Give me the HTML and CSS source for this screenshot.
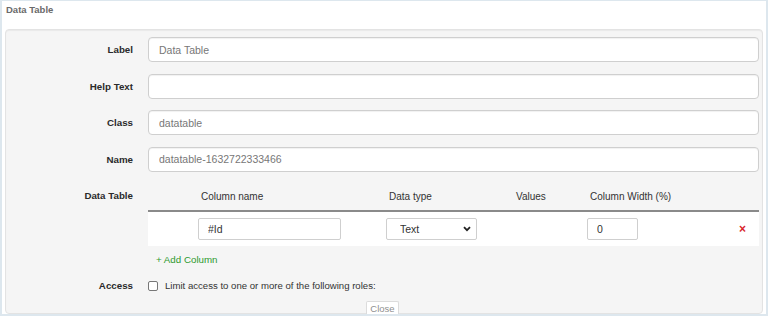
FILE: index.html
```html
<!DOCTYPE html>
<html>
<head>
    <title>Data Table</title>
    <link rel="stylesheet" href="styles.css">
</head>
<body>
    <div class="window">
        <div class="window-title">Data Table</div>
        <div class="panel">
            <div class="form-row">
                <label class="form-label">Label</label>
                <input class="form-control" value="Data Table">
            </div>
            <div class="form-row">
                <label class="form-label">Help Text</label>
                <input class="form-control" value="">
            </div>
            <div class="form-row">
                <label class="form-label">Class</label>
                <input class="form-control" value="datatable">
            </div>
            <div class="form-row">
                <label class="form-label">Name</label>
                <input class="form-control" value="datatable-1632722333466">
            </div>
            <div class="form-row table-row">
                <label class="form-label">Data Table</label>
                <div class="columns">
                    <div class="columns-head">
                        <span></span>
                        <span>Column name</span>
                        <span>Data type</span>
                        <span>Values</span>
                        <span>Column Width (%)</span>
                        <span></span>
                    </div>
                    <div class="columns-body">
                        <span></span>
                        <span><input class="cell-input name-input" value="#Id"></span>
                        <span>
                            <span class="select-wrap">
                                <select class="cell-select"><option>Text</option></select>
                                <svg class="select-arrow" width="8" height="6" viewBox="0 0 8 6"><path d="M1 1.2 L4 4.2 L7 1.2" fill="none" stroke="#222" stroke-width="1.8"/></svg>
                            </span>
                        </span>
                        <span></span>
                        <span><input class="cell-input width-input" value="0"></span>
                        <span class="remove">&times;</span>
                    </div>
                    <a class="add-column">+ Add Column</a>
                </div>
            </div>
            <div class="form-row access-row">
                <label class="form-label">Access</label>
                <label class="check">
                    <input type="checkbox" class="check-box">
                    <span>Limit access to one or more of the following roles:</span>
                </label>
            </div>
            <div class="panel-foot">
                <button class="close-btn">Close</button>
            </div>
        </div>
    </div>
</body>
</html>
```

FILE: styles.css
```css
body {
    margin: 0;
    font-family: "Liberation Sans", Arial, sans-serif;
    color: #333;
    background-color: #ffffff;
}
.window {
    width: 768px;
    height: 316px;
    box-sizing: border-box;
    border: 2px solid #dde7ee;
    border-top-width: 1px;
    padding: 0 3px 0 3px;
    background-color: #ffffff;
    overflow: hidden;
}
.window-title {
    font-size: 9.5px;
    font-weight: bold;
    color: #6a6a6a;
    line-height: 14px;
    padding: 2px 0 0 1px;
    margin-bottom: 12px;
}
.panel {
    background-color: #f5f5f5;
    border: 1px solid #e3e3e3;
    border-radius: 4px;
    box-shadow: inset 0 1px 1px rgba(0, 0, 0, 0.05);
    padding: 7px 3px 0 0;
}
.form-row {
    display: grid;
    grid-template-columns: 127px 1fr;
    column-gap: 15px;
    align-items: center;
    margin-bottom: 11.5px;
}
.form-label {
    text-align: right;
    font-size: 9.75px;
    font-weight: bold;
    color: #2a2a2a;
}
.form-control {
    height: 25px;
    box-sizing: border-box;
    border: 1px solid #cfcfcf;
    border-radius: 4px;
    box-shadow: inset 0 1px 1px rgba(0, 0, 0, 0.06);
    padding: 0 10px;
    font-family: inherit;
    font-size: 10.5px;
    color: #777;
    background-color: #ffffff;
    margin: 0;
}
.table-row {
    align-items: start;
    margin-bottom: 10px;
}
.table-row .form-label {
    line-height: 26px;
}
.columns-head,
.columns-body {
    display: grid;
    grid-template-columns: 45px 188px 127px 74px 120px 1fr;
    align-items: center;
}
.columns-head {
    height: 27px;
    border-bottom: 2px solid #8a8a8a;
    font-size: 10px;
    color: #333;
}
.columns-head span {
    padding-left: 8px;
}
.columns-body {
    height: 34px;
    background-color: #ffffff;
}
.columns-body > span {
    padding-left: 5px;
    display: flex;
    align-items: center;
}
.cell-input {
    height: 22px;
    box-sizing: border-box;
    border: 1px solid #cfcfcf;
    border-radius: 2px;
    padding: 0 9px;
    font-family: inherit;
    font-size: 10.5px;
    color: #333;
    margin: 0;
}
.name-input {
    width: 143px;
}
.width-input {
    width: 51px;
}
.select-wrap {
    position: relative;
    display: inline-block;
}
.cell-select {
    appearance: none;
    width: 91px;
    height: 22px;
    box-sizing: border-box;
    border: 1px solid #cfcfcf;
    border-radius: 2px;
    background-color: #ffffff;
    padding: 0 0 0 13px;
    font-family: inherit;
    font-size: 10.5px;
    color: #333;
    margin: 0;
}
.select-arrow {
    position: absolute;
    right: 6px;
    top: 8px;
}
.columns-body .remove {
    justify-content: flex-end;
    padding-right: 13px;
    color: #d9262c;
    font-weight: bold;
    font-size: 12px;
}
.add-column {
    display: block;
    margin-top: 7px;
    padding-left: 8px;
    line-height: 14px;
    font-size: 9.75px;
    color: #2e9a2e;
}
.access-row {
    margin-bottom: 0;
}
.check {
    display: flex;
    align-items: center;
    gap: 7px;
    font-size: 9.6px;
    color: #333;
    line-height: 14px;
    padding-top: 2px;
}
.check-box {
    appearance: none;
    width: 10px;
    height: 10px;
    margin: 0;
    border: 1px solid #777;
    border-radius: 2px;
    background-color: #ffffff;
}
.panel-foot {
    display: flex;
    justify-content: center;
    margin-top: 8px;
    margin-bottom: -2px;
}
.close-btn {
    height: 14px;
    padding: 0 3px;
    border: 1px solid #dcdcdc;
    border-bottom: none;
    border-radius: 2px 2px 0 0;
    background-color: #ffffff;
    font-family: inherit;
    font-size: 9.5px;
    color: #8f8f8f;
    line-height: 13px;
}
```
